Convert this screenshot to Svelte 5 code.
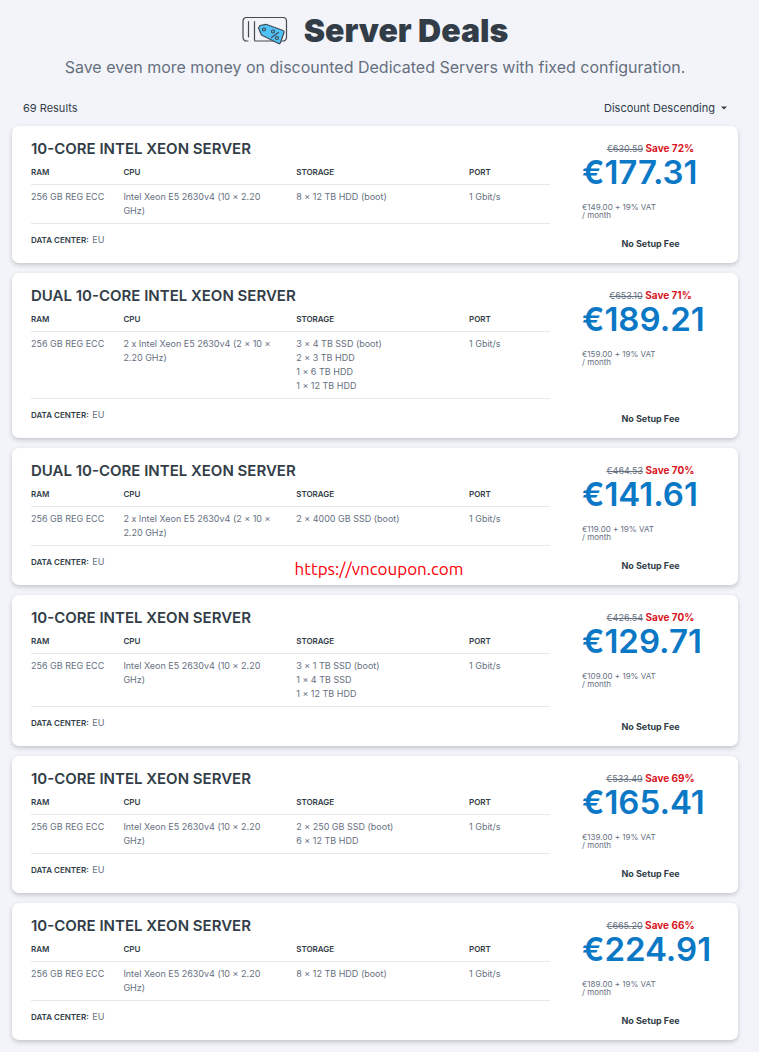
<script>
  const small = "10-Core Intel Xeon Server";
  const dual = "Dual 10-Core Intel Xeon Server";
  const smallCpu = "Intel Xeon E5 2630v4 (10 × 2.20 GHz)";
  const dualCpu = "2 x Intel Xeon E5 2630v4 (2 × 10 × 2.20 GHz)";

  let order = "Discount Descending";

  const total = 69;

  const deals = [
    { name: small, cpu: smallCpu, storage: ["8 × 12 TB HDD (boot)"], old: "630.59", save: 72, price: "177.31", net: "149.00" },
    { name: dual, cpu: dualCpu, storage: ["3 × 4 TB SSD (boot)", "2 × 3 TB HDD", "1 × 6 TB HDD", "1 × 12 TB HDD"], old: "653.10", save: 71, price: "189.21", net: "159.00" },
    { name: dual, cpu: dualCpu, storage: ["2 × 4000 GB SSD (boot)"], old: "464.53", save: 70, price: "141.61", net: "119.00", stamp: "https://vncoupon.com" },
    { name: small, cpu: smallCpu, storage: ["3 × 1 TB SSD (boot)", "1 × 4 TB SSD", "1 × 12 TB HDD"], old: "426.54", save: 70, price: "129.71", net: "109.00" },
    { name: small, cpu: smallCpu, storage: ["2 × 250 GB SSD (boot)", "6 × 12 TB HDD"], old: "533.49", save: 69, price: "165.41", net: "139.00" },
    { name: small, cpu: smallCpu, storage: ["8 × 12 TB HDD (boot)"], old: "665.20", save: 66, price: "224.91", net: "189.00" },
  ];
</script>

<style>
  :global(body) {
    margin: 0;
    background-color: #f3f4f9;
  }

  main {
    padding: 12px 21px 11px 12px;
    font-family: Inter, "Liberation Sans", sans-serif;
    color: #323d48;
  }

  header {
    text-align: center;
  }

  .heading {
    display: flex;
    justify-content: center;
    align-items: center;
    gap: 16px;
  }

  h1 {
    margin: 0;
    font-size: 32px;
    line-height: 38px;
    font-weight: 900;
  }

  header p {
    margin: 5px 0 0 0;
    font-size: 16px;
    line-height: 24px;
    color: #66707f;
  }

  .toolbar {
    display: flex;
    justify-content: space-between;
    align-items: center;
    height: 20px;
    padding: 0 11px;
    margin: 19px 0 8px 0;
    font-size: 11px;
  }

  .sort {
    display: flex;
    align-items: center;
    gap: 6px;
  }

  select {
    appearance: none;
    border: none;
    padding: 0;
    background: none;
    font: inherit;
    color: inherit;
    text-align: right;
  }

  .deals {
    display: flex;
    flex-direction: column;
    gap: 10px;
  }

  .card {
    position: relative;
    display: flex;
    gap: 32px;
    padding: 13px 19px 0 19px;
    border-radius: 7px;
    background-color: white;
    box-shadow: 0 2px 4px rgba(50, 60, 75, 0.25);
  }

  .specs {
    flex: 1;
  }

  h2 {
    margin: 0;
    font-size: 15px;
    line-height: 20px;
    font-weight: 600;
    text-transform: uppercase;
  }

  table {
    width: 100%;
    border-collapse: separate;
    border-spacing: 0;
    table-layout: fixed;
  }

  th,
  td {
    box-sizing: border-box;
    padding: 5px 14px 5px 0;
    border-bottom: 1px solid #e6e8ec;
    text-align: left;
    vertical-align: top;
    line-height: 14px;
  }

  th {
    padding-top: 6px;
    font-size: 8px;
    font-weight: 600;
    text-transform: uppercase;
  }

  td {
    font-size: 9px;
    color: #66707f;
  }

  td:first-child {
    padding-right: 0;
    white-space: nowrap;
  }

  .ram {
    width: 17.8%;
  }

  .wide {
    width: 33.3%;
  }

  .location {
    margin: 9px 0 16px 0;
    font-size: 9px;
    line-height: 14px;
    color: #66707f;
  }

  .location b {
    margin-right: 1px;
    font-size: 8px;
    font-weight: 600;
    color: #323d48;
    text-transform: uppercase;
  }

  .offer {
    display: flex;
    flex-direction: column;
    width: 137px;
  }

  .offer p {
    margin: 0;
  }

  .offer .discount {
    margin-top: 2px;
    font-size: 9px;
    line-height: 14px;
    text-align: center;
  }

  .discount del {
    color: #66707f;
  }

  .discount strong {
    font-size: 10px;
    font-weight: 700;
    color: #d9141e;
  }

  .price {
    font-size: 33px;
    line-height: 32px;
    font-weight: 600;
    color: #0b78c6;
  }

  .offer .vat {
    margin-top: 15px;
    font-size: 8px;
    line-height: 8px;
    color: #66707f;
  }

  .offer .setup {
    margin: auto 0 12px 0;
    font-size: 9px;
    line-height: 14px;
    font-weight: 700;
    text-align: center;
  }

  .stamp {
    position: absolute;
    left: 0;
    right: 0;
    bottom: 4px;
    padding-left: 8px;
    text-align: center;
    font-family: Ubuntu, "Noto Sans", sans-serif;
    font-size: 17px;
    line-height: 24px;
    color: #fb0007;
  }
</style>

<main>
  <header>
    <div class="heading">
      <svg width="46" height="30" viewBox="0 0 46 30" fill="none" stroke="#434a52" stroke-width="1.2" stroke-linecap="round" stroke-linejoin="round" aria-hidden="true">
        <path d="M6 25H4.500a3.500 3.500 0 0 1-3.500-3.500V5a3.500 3.500 0 0 1 3.500-3.500H41A3.500 3.500 0 0 1 44.500 5v16.500a3.500 3.500 0 0 1-3.500 3.500H13.500a1 1 0 0 1-1-1V5.500M6.500 5.500v15.500" />
        <path d="M16.500 12 18 9.500 24 8.300 41 14.500Q42.500 15 42 16.500L38.500 26.500Q38 28 36.500 27.500L19.500 19Z" fill="#4fc3f7" />
        <circle cx="22" cy="13.500" r="1.500" />
        <circle cx="31" cy="15.500" r="1.500" />
        <circle cx="35" cy="22" r="1.500" />
        <path d="m36.500 16.500-7 5" />
      </svg>
      <h1>Server Deals</h1>
    </div>
    <p>Save even more money on discounted Dedicated Servers with fixed configuration.</p>
  </header>

  <div class="toolbar">
    <span>{total} Results</span>
    <label class="sort">
      <select bind:value={order} aria-label="Sort by">
        <option>Discount Descending</option>
        <option>Discount Ascending</option>
        <option>Price Ascending</option>
      </select>
      <svg width="6" height="4" viewBox="0 0 6 4" aria-hidden="true"><path d="M0 0.500h6L3 3.500z" fill="#323d48" /></svg>
    </label>
  </div>

  <div class="deals">
    {#each deals as deal}
      <article class="card">
        <div class="specs">
          <h2>{deal.name}</h2>
          <table>
            <thead>
              <tr>
                <th class="ram">RAM</th>
                <th class="wide">CPU</th>
                <th class="wide">Storage</th>
                <th>Port</th>
              </tr>
            </thead>
            <tbody>
              <tr>
                <td>256 GB REG ECC</td>
                <td>{deal.cpu}</td>
                <td>
                  {#each deal.storage as disk}
                    <div>{disk}</div>
                  {/each}
                </td>
                <td>1 Gbit/s</td>
              </tr>
            </tbody>
          </table>
          <p class="location"><b>Data Center:</b> EU</p>
        </div>
        <div class="offer">
          <p class="discount"><del>€{deal.old}</del> <strong>Save {deal.save}%</strong></p>
          <p class="price">€{deal.price}</p>
          <p class="vat">€{deal.net} + 19% VAT<br />/ month</p>
          <p class="setup">No Setup Fee</p>
        </div>
        {#if deal.stamp}
          <span class="stamp">{deal.stamp}</span>
        {/if}
      </article>
    {/each}
  </div>
</main>
